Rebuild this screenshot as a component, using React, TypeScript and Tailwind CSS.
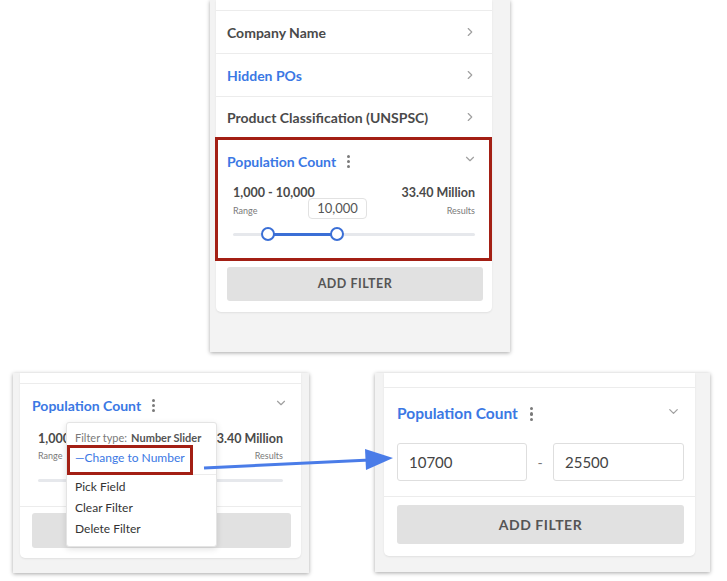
import { ChevronDown, ChevronRight } from 'lucide-react';

const font = { fontFamily: 'Lato, "Open Sans", sans-serif' };

const Kebab = ({ size = 3 }: { size?: number }) => (
  <span className="flex flex-col gap-[2px]">
    {[0, 1, 2].map((i) => (
      <span key={i} className="rounded-full bg-[#7a7a7a]" style={{ width: size, height: size }} />
    ))}
  </span>
);

const Handle = ({ left }: { left: number }) => (
  <span
    className="absolute top-0 h-[14px] w-[14px] rounded-full border-2 border-[#3b6fd6] bg-white"
    style={{ left: left - 7 }}
  />
);

const ListRow = ({ label, blue }: { label: string; blue?: boolean }) => (
  <div className="flex h-[43px] items-center justify-between border-b border-[#ececec] pl-[11px] pr-[15px]">
    <span className={`text-[14px] font-bold ${blue ? 'text-[#3b78e4]' : 'text-[#4a4a4a]'}`}>{label}</span>
    <ChevronRight className="h-[14px] w-[14px] text-[#a0a0a0]" strokeWidth={2} />
  </div>
);

const TopPanel = () => (
  <div className="ml-[210px] h-[352px] w-[300px] bg-[#f3f3f3] pl-[6px] shadow-[0_1px_4px_rgba(0,0,0,0.35)]">
    <div className="w-[276px] rounded-b-[5px] bg-white pb-[11px] shadow-[0_1px_2px_rgba(0,0,0,0.08)]">
      <div className="h-[11px] border-b border-[#ececec]" />
      <ListRow label="Company Name" />
      <ListRow label="Hidden POs" blue />
      <div className="flex h-[40px] items-center justify-between pl-[11px] pr-[15px]">
        <span className="text-[14px] font-bold text-[#4a4a4a]">Product Classification (UNSPSC)</span>
        <ChevronRight className="h-[14px] w-[14px] text-[#a0a0a0]" strokeWidth={2} />
      </div>
      <div className="-ml-px h-[124px] border-[3px] border-[#a31f14] pt-[12px] pb-[17px]">
        <div className="flex h-[18px] items-center justify-between pl-[9px] pr-[12px]">
          <div className="flex items-center gap-[11px]">
            <span className="text-[14px] font-bold text-[#3b78e4]">Population Count</span>
            <Kebab />
          </div>
          <ChevronDown className="-mt-[5px] h-[14px] w-[14px] text-[#a0a0a0]" strokeWidth={2} />
        </div>
        <div className="mt-[15px] flex justify-between pl-[15px] pr-[14px]">
          <div className="flex flex-col">
            <span className="text-[12.5px] leading-[16px] font-bold text-[#4a4a4a]">1,000 - 10,000</span>
            <span className="mt-[4px] text-[9px] leading-[12px] text-[#7a7a7a]">Range</span>
          </div>
          <div className="flex flex-col items-end">
            <span className="text-[12.5px] leading-[16px] font-bold text-[#4a4a4a]">33.40 Million</span>
            <span className="mt-[4px] text-[9px] leading-[12px] text-[#7a7a7a]">Results</span>
          </div>
        </div>
        <div className="relative mt-[10px] ml-[15px] h-[14px] w-[242px]">
          <span className="absolute top-[5.5px] left-0 h-[3px] w-full rounded bg-[#e6e8ec]" />
          <span className="absolute top-[5.5px] left-[35px] h-[3px] w-[69px] bg-[#3b6fd6]" />
          <Handle left={35} />
          <Handle left={104} />
          <span className="absolute bottom-[22px] left-[75px] flex h-[21px] w-[59px] items-center justify-center rounded-[4px] border border-[#e2e2e2] bg-white text-[13px] text-[#555]">
            10,000
          </span>
        </div>
      </div>
      <button className="mt-[6px] ml-[11px] flex h-[34px] w-[256px] items-center justify-center rounded-[3px] bg-[#e1e1e1] text-[12.5px] font-bold tracking-[0.04em] text-[#555]">
        ADD FILTER
      </button>
    </div>
  </div>
);

const MenuPanel = () => (
  <div className="ml-[13px] h-[200px] w-[296px] bg-[#f3f3f3] pl-[7px] shadow-[0_1px_4px_rgba(0,0,0,0.35)]">
    <div className="relative w-[281px] rounded-b-[5px] bg-white pb-[10px] shadow-[0_1px_2px_rgba(0,0,0,0.08)]">
      <div className="h-[11px] border-b border-[#ececec]" />
      <div className="border-b border-[#ececec] pt-[12px] pb-[19px]">
        <div className="flex h-[18px] items-center justify-between pl-[12px] pr-[13px]">
          <div className="flex items-center gap-[11px]">
            <span className="text-[14px] font-bold text-[#3b78e4]">Population Count</span>
            <Kebab />
          </div>
          <ChevronDown className="-mt-[5px] h-[14px] w-[14px] text-[#a0a0a0]" strokeWidth={2} />
        </div>
        <div className="mt-[17px] flex justify-between pl-[18px] pr-[18px]">
          <div className="flex flex-col">
            <span className="text-[12.5px] leading-[16px] font-bold text-[#4a4a4a]">1,000 - 10,000</span>
            <span className="mt-[3px] text-[9px] leading-[12px] text-[#7a7a7a]">Range</span>
          </div>
          <div className="flex flex-col items-end">
            <span className="text-[12.5px] leading-[16px] font-bold text-[#4a4a4a]">33.40 Million</span>
            <span className="mt-[3px] text-[9px] leading-[12px] text-[#7a7a7a]">Results</span>
          </div>
        </div>
        <div className="relative mt-[11px] ml-[18px] h-[14px] w-[245px]">
          <span className="absolute top-[5.5px] left-0 h-[3px] w-full rounded bg-[#e6e8ec]" />
        </div>
      </div>
      <button className="mt-[6px] ml-[12px] flex h-[35px] w-[259px] items-center justify-center rounded-[3px] bg-[#e1e1e1] text-[12.5px] font-bold tracking-[0.04em] text-[#555]">
        ADD FILTER
      </button>

      {/* field menu opened from the kebab */}
      <div className="absolute top-[49px] left-[46px] flex h-[125px] w-[151px] flex-col rounded-[3px] border border-[#e4e4e4] bg-white shadow-[0_2px_6px_rgba(0,0,0,0.12)]">
        <div className="flex h-[22px] items-end pl-[8px] text-[11px] leading-[14px]">
          <span className="text-[#7a7a7a]">Filter type:</span>
          <span className="ml-[4px] font-bold text-[#555]">Number Slider</span>
        </div>
        <div className="flex">
          <div className="h-[30px] w-[126px] border-[3px] border-[#a31f14] pl-[5px] text-[12px] leading-[20px] text-[#3b78e4]">
            —Change to Number
          </div>
          <div className="flex-1 border-b border-[#ececec]" />
        </div>
        <div className="flex flex-col pt-[1px] pl-[8px] text-[12px] leading-[21px] text-[#333]">
          <span>Pick Field</span>
          <span>Clear Filter</span>
          <span>Delete Filter</span>
        </div>
      </div>
    </div>
  </div>
);

const NumberPanel = () => (
  <div className="ml-[66px] h-[199px] w-[335px] bg-[#f3f3f3] pl-[9px] shadow-[0_1px_4px_rgba(0,0,0,0.35)]">
    <div className="w-[311px] rounded-b-[5px] bg-white pb-[12px] shadow-[0_1px_2px_rgba(0,0,0,0.08)]">
      <div className="h-[15px] border-b border-[#ececec]" />
      <div className="border-b border-[#ececec] pt-[16px] pb-[15px]">
        <div className="flex h-[20px] items-center justify-between pl-[13px] pr-[14px]">
          <div className="flex items-center gap-[12px]">
            <span className="text-[15.5px] font-bold text-[#3b78e4]">Population Count</span>
            <Kebab size={3.5} />
          </div>
          <ChevronDown className="-mt-[6px] h-[15px] w-[15px] text-[#a0a0a0]" strokeWidth={2} />
        </div>
        <div className="mt-[19px] flex items-center pl-[13px]">
          <div className="flex h-[38px] w-[130px] items-center rounded-[3px] border border-[#dedede] pl-[11px] text-[15px] text-[#444]">
            10700
          </div>
          <span className="w-[26px] text-center text-[14px] text-[#777]">-</span>
          <div className="flex h-[38px] w-[131px] items-center rounded-[3px] border border-[#dedede] pl-[11px] text-[15px] text-[#444]">
            25500
          </div>
        </div>
      </div>
      <button className="mt-[8px] ml-[13px] flex h-[39px] w-[287px] items-center justify-center rounded-[3px] bg-[#e1e1e1] text-[14px] font-bold tracking-[0.04em] text-[#555]">
        ADD FILTER
      </button>
    </div>
  </div>
);

export default function App() {
  return (
    <div className="relative h-[581px] w-[727px] overflow-hidden bg-white" style={font}>
      <TopPanel />
      <div className="mt-[21px] flex items-start">
        <MenuPanel />
        <NumberPanel />
      </div>
      <svg className="pointer-events-none absolute inset-0" width="727" height="581">
        <line x1="204" y1="468" x2="370" y2="460" stroke="#4a7ce8" strokeWidth="3" />
        <polygon points="393,458 365,449 366,470" fill="#4a7ce8" />
      </svg>
    </div>
  );
}
